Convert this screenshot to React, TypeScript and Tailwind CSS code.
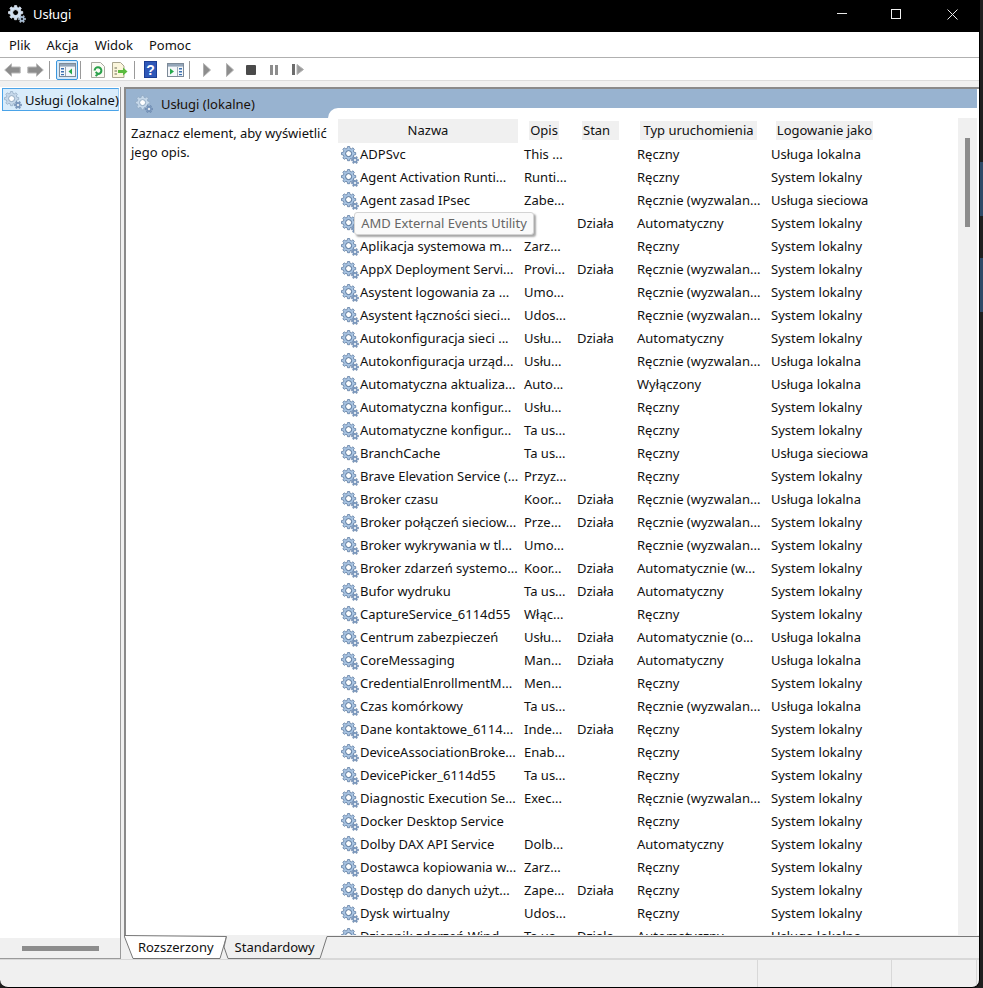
import React from "react";

type Row = [string, string, string, string, string];

const rows: Row[] = [
  ["ADPSvc", "This ...", "", "Ręczny", "Usługa lokalna"],
  ["Agent Activation Runti...", "Runti...", "", "Ręczny", "System lokalny"],
  ["Agent zasad IPsec", "Zabe...", "", "Ręcznie (wyzwalan...", "Usługa sieciowa"],
  ["", "", "Działa", "Automatyczny", "System lokalny"],
  ["Aplikacja systemowa m...", "Zarz...", "", "Ręczny", "System lokalny"],
  ["AppX Deployment Servi...", "Provi...", "Działa", "Ręcznie (wyzwalan...", "System lokalny"],
  ["Asystent logowania za ...", "Umo...", "", "Ręcznie (wyzwalan...", "System lokalny"],
  ["Asystent łączności sieci...", "Udos...", "", "Ręcznie (wyzwalan...", "System lokalny"],
  ["Autokonfiguracja sieci ...", "Usłu...", "Działa", "Automatyczny", "System lokalny"],
  ["Autokonfiguracja urząd...", "Usłu...", "", "Ręcznie (wyzwalan...", "Usługa lokalna"],
  ["Automatyczna aktualiza...", "Auto...", "", "Wyłączony", "Usługa lokalna"],
  ["Automatyczna konfigur...", "Usłu...", "", "Ręczny", "System lokalny"],
  ["Automatyczne konfigur...", "Ta us...", "", "Ręczny", "System lokalny"],
  ["BranchCache", "Ta us...", "", "Ręczny", "Usługa sieciowa"],
  ["Brave Elevation Service (...", "Przyz...", "", "Ręczny", "System lokalny"],
  ["Broker czasu", "Koor...", "Działa", "Ręcznie (wyzwalan...", "Usługa lokalna"],
  ["Broker połączeń sieciow...", "Prze...", "Działa", "Ręcznie (wyzwalan...", "System lokalny"],
  ["Broker wykrywania w tl...", "Umo...", "", "Ręcznie (wyzwalan...", "System lokalny"],
  ["Broker zdarzeń systemo...", "Koor...", "Działa", "Automatycznie (w...", "System lokalny"],
  ["Bufor wydruku", "Ta us...", "Działa", "Automatyczny", "System lokalny"],
  ["CaptureService_6114d55", "Włąc...", "", "Ręczny", "System lokalny"],
  ["Centrum zabezpieczeń", "Usłu...", "Działa", "Automatycznie (o...", "Usługa lokalna"],
  ["CoreMessaging", "Man...", "Działa", "Automatyczny", "Usługa lokalna"],
  ["CredentialEnrollmentM...", "Men...", "", "Ręczny", "System lokalny"],
  ["Czas komórkowy", "Ta us...", "", "Ręcznie (wyzwalan...", "Usługa lokalna"],
  ["Dane kontaktowe_6114...", "Inde...", "Działa", "Ręczny", "System lokalny"],
  ["DeviceAssociationBroke...", "Enab...", "", "Ręczny", "System lokalny"],
  ["DevicePicker_6114d55", "Ta us...", "", "Ręczny", "System lokalny"],
  ["Diagnostic Execution Se...", "Exec...", "", "Ręcznie (wyzwalan...", "System lokalny"],
  ["Docker Desktop Service", "", "", "Ręczny", "System lokalny"],
  ["Dolby DAX API Service", "Dolb...", "", "Automatyczny", "System lokalny"],
  ["Dostawca kopiowania w...", "Zarz...", "", "Ręczny", "System lokalny"],
  ["Dostęp do danych użyt...", "Zape...", "Działa", "Ręczny", "System lokalny"],
  ["Dysk wirtualny", "Udos...", "", "Ręczny", "System lokalny"],
  ["Dziennik zdarzeń Wind...", "Ta us...", "Działa", "Automatyczny", "Usługa lokalna"],
];

function gearPath(cx: number, cy: number, ro: number, ri: number, teeth: number) {
  const pts: string[] = [];
  const step = (Math.PI * 2) / teeth;
  for (let i = 0; i < teeth; i++) {
    const a = i * step;
    const list: [number, number][] = [
      [a - step * 0.34, ri],
      [a - step * 0.18, ro],
      [a + step * 0.18, ro],
      [a + step * 0.34, ri],
    ];
    for (const [t, r] of list) {
      pts.push(`${(cx + Math.cos(t) * r).toFixed(2)} ${(cy + Math.sin(t) * r).toFixed(2)}`);
    }
  }
  return "M" + pts.join("L") + "Z";
}

function Gear({ dark = false, faded = false }: { dark?: boolean; faded?: boolean }) {
  const big = dark ? "#cfe0f2" : faded ? "#c6d8ea" : "#a9c4e2";
  const edge = dark ? "#e9f1fa" : faded ? "#8fa8c0" : "#4f6f96";
  const hole = dark ? "#000000" : "#ffffff";
  return (
    <svg width="18" height="18" viewBox="0 0 18 18" className="shrink-0">
      <path d={gearPath(7.6, 7.6, 7.2, 5.4, 8)} fill={big} stroke={edge} strokeWidth="0.7" strokeLinejoin="round" />
      <circle cx="7.6" cy="7.6" r="3" fill={hole} stroke={edge} strokeWidth="1" />
      <path d={gearPath(14, 14, 3.8, 2.5, 6)} fill={dark ? "#9fb6cf" : "#7f9cc0"} stroke={dark ? "#dbe6f2" : "#56729a"} strokeWidth="0.4" />
      <circle cx="14" cy="14" r="1" fill={hole} />
    </svg>
  );
}

function Sep({ className }: { className: string }) {
  return <div className={`h-[18px] w-px bg-[#9a9a9a] ${className}`} />;
}

function Arrow({ flip = false, className }: { flip?: boolean; className: string }) {
  return (
    <svg width="17" height="14" viewBox="0 0 17 14" className={className} style={flip ? { transform: "scaleX(-1)" } : undefined}>
      <path d="M0.7 7 L7.5 0.8 V4 H16.2 V10 H7.5 V13.2 Z" fill="#8c8c8c" stroke="#b8b8b8" strokeWidth="1" strokeLinejoin="round" />
    </svg>
  );
}

function ConsoleIcon({ green }: { green: "left" | "mid" }) {
  return (
    <svg width="17" height="14" viewBox="0 0 17 14">
      <rect x="0.5" y="0.5" width="16" height="13" fill="#f4f7fa" stroke="#7d8a98" />
      <rect x="1" y="1" width="15" height="2.6" fill="#93a5b8" />
      {green === "left" ? (
        <>
          <rect x="2" y="5" width="3" height="1.5" fill="#3a6fb0" />
          <rect x="2" y="8" width="3" height="1.5" fill="#3a6fb0" />
          <rect x="2" y="11" width="3" height="1.2" fill="#3a6fb0" />
          <line x1="6.5" y1="4" x2="6.5" y2="13" stroke="#9aa6b2" />
          <path d="M13 5.5 V11.5 L9.5 8.5 Z" fill="#24a84a" />
        </>
      ) : (
        <>
          <path d="M3 5.5 V11.5 L7 8.5 Z" fill="#24a84a" />
          <line x1="10.5" y1="4" x2="10.5" y2="13" stroke="#9aa6b2" />
          <rect x="12" y="5" width="3" height="1.5" fill="#3a6fb0" />
          <rect x="12" y="8" width="3" height="1.5" fill="#3a6fb0" />
          <rect x="12" y="11" width="3" height="1.2" fill="#3a6fb0" />
        </>
      )}
    </svg>
  );
}

function Toolbar() {
  return (
    <div className="flex h-[22px] items-center bg-white pt-[1px]">
      <Arrow className="ml-[4px]" />
      <Arrow flip className="ml-[6px]" />
      <Sep className="ml-[5px]" />
      <div className="ml-[6px] flex h-[20px] w-[22px] items-center justify-center rounded-[2px] border border-[#3a96dd] bg-[#d5e9f9]">
        <ConsoleIcon green="left" />
      </div>
      <Sep className="ml-[2px]" />
      <svg width="14" height="16" viewBox="0 0 14 16" className="ml-[10px]">
        <path d="M0.5 0.5 H9.5 L13.5 4.5 V15.5 H0.5 Z" fill="#fbfbf4" stroke="#a9a9a0" />
        <path d="M3.6 8.5 A3.4 3.4 0 1 1 7 12 M7 12 L4.6 10 M7 12 L4.6 14" fill="none" stroke="#2aa14a" strokeWidth="2" />
      </svg>
      <svg width="16" height="16" viewBox="0 0 16 16" className="ml-[7px]">
        <path d="M0.5 0.5 H8.5 L12 4 V15.5 H0.5 Z" fill="#fbf6dc" stroke="#a9a58e" />
        <path d="M2.5 6 H5 M2.5 9 H5 M2.5 12 H5" stroke="#6b6b55" />
        <path d="M6 8 H11 V5.5 L15.5 9.5 L11 13.5 V11 H6 Z" fill="#5bbb3e" />
      </svg>
      <Sep className="ml-[6px]" />
      <div className="ml-[9px] flex h-[17px] w-[13px] items-center justify-center border border-[#1c3d94] bg-[#2f58b8] text-[14px] font-bold leading-none text-white [font-family:'Liberation_Sans',sans-serif]">
        ?
      </div>
      <div className="ml-[10px]">
        <ConsoleIcon green="mid" />
      </div>
      <Sep className="ml-[5px]" />
      <svg width="8" height="14" viewBox="0 0 8 14" className="ml-[13px]"><path d="M0.5 0.5 L7.5 7 L0.5 13.5 Z" fill="#8d8d8d" stroke="#b0b0b0" /></svg>
      <svg width="8" height="14" viewBox="0 0 8 14" className="ml-[15px]"><path d="M0.5 0.5 L7.5 7 L0.5 13.5 Z" fill="#8d8d8d" stroke="#b0b0b0" /></svg>
      <div className="ml-[12px] h-[10px] w-[10px] rounded-[1px] bg-[#4a4a4a]" />
      <svg width="8" height="10" viewBox="0 0 8 10" className="ml-[14px]"><rect width="3" height="10" fill="#8d8d8d" /><rect x="5" width="3" height="10" fill="#8d8d8d" /></svg>
      <svg width="12" height="11" viewBox="0 0 12 11" className="ml-[14px]"><rect width="3" height="11" fill="#6c6c6c" /><path d="M5 0.5 L11.5 5.5 L5 10.5 Z" fill="#9a9a9a" stroke="#b0b0b0" /></svg>
    </div>
  );
}

function HeadCell({ label, className }: { label: string; className: string }) {
  return <div className={`flex items-center whitespace-nowrap bg-[#f0f0f0] ${className}`}>{label}</div>;
}

function ServiceRow({ row }: { row: Row }) {
  return (
    <div className="grid h-[23px] shrink-0 grid-cols-[186px_53px_60px_134px_1fr] items-center whitespace-nowrap">
      <div className="flex items-center gap-[1px] pl-[3px]">
        <Gear />
        <span>{row[0]}</span>
      </div>
      <span>{row[1]}</span>
      <span>{row[2]}</span>
      <span>{row[3]}</span>
      <span>{row[4]}</span>
    </div>
  );
}

export default function App() {
  return (
    <div className="relative h-[988px] w-[983px] overflow-hidden bg-[#1f1f1f] text-[13px] leading-none text-[#111] [font-family:'Noto_Sans',sans-serif]">
      <div className="absolute left-[980px] top-[162px] h-[54px] w-[3px] bg-[#2f4a68]" />
      <div className="absolute left-[980px] top-[258px] h-[54px] w-[3px] bg-[#2f4a68]" />
      <div className="flex h-[988px] w-[980px] flex-col overflow-hidden rounded-b-[8px] border-b border-r border-black bg-[#f0f0f0]">
        {/* Title bar */}
        <div className="flex h-[32px] shrink-0 items-center bg-black pb-[4px] text-white">
          <div className="ml-[8px]"><Gear dark /></div>
          <span className="ml-[7px]">Usługi</span>
          <div className="flex-1" />
          <svg width="10" height="2" viewBox="0 0 10 2" className="mr-[44px]"><rect width="10" height="1" fill="#e8e8e8" /></svg>
          <svg width="10" height="10" viewBox="0 0 10 10" className="mr-[46px]"><rect x="0.5" y="0.5" width="9" height="9" fill="none" stroke="#f0f0f0" /></svg>
          <svg width="11" height="11" viewBox="0 0 11 11" className="mr-[21px]"><path d="M0.5 0.5 L10.5 10.5 M10.5 0.5 L0.5 10.5" stroke="#e8e8e8" /></svg>
        </div>
        {/* Menu bar */}
        <div className="flex h-[25px] shrink-0 items-center gap-[16px] bg-white pl-[9px] pt-[2px]">
          <span>Plik</span>
          <span>Akcja</span>
          <span>Widok</span>
          <span>Pomoc</span>
        </div>
        <div className="h-px shrink-0 bg-[#b0b0b0]" />
        <Toolbar />
        <div className="h-px shrink-0 bg-[#dcdcdc]" />
        <div className="h-[6px] shrink-0" />

        {/* Main split */}
        <div className="flex h-[872px] shrink-0">
          {/* Tree */}
          <div className="flex w-[121px] shrink-0 flex-col border-b border-r border-[#9a9a9a] bg-white pt-[1px]">
            <div className="ml-[2px] flex h-[23px] w-[117px] items-center gap-[3px] whitespace-nowrap border border-[#4aa3e8] border-r-[#9fd0f5] bg-[#d9ecfb] pl-[1px]">
              <Gear faded />
              <span className="pt-[2px]">Usługi (lokalne)</span>
            </div>
            <div className="flex-1" />
            <div className="flex h-[20px] shrink-0 items-center justify-center bg-[#f0f0f0]">
              <div className="h-[5px] w-[77px] bg-[#8c8c8c]" />
            </div>
          </div>
          <div className="w-[3px] shrink-0" />
          {/* Right panel */}
          <div className="flex min-w-0 flex-1 flex-col">
            <div className="flex h-[848px] shrink-0 flex-col overflow-hidden border-l-2 border-t-2 border-[#8a8a8a] bg-white">
              <div className="mr-[2px] flex h-[29px] shrink-0 items-center gap-[8px] bg-[#98b3d0] pl-[9px] text-[#1a1008]">
                <Gear faded />
                <span className="pt-[2px]">Usługi (lokalne)</span>
              </div>
              <div className="flex min-h-0 flex-1 pr-[2px]">
                <div className="w-[202px] shrink-0 whitespace-nowrap pl-[5px] pt-[6px] leading-[19px]">
                  Zaznacz element, aby wyświetlić
                  <br />
                  jego opis.
                </div>
                <div className="relative -mt-[10px] flex min-w-0 flex-1 rounded-tl-[10px] bg-white pt-[10px]">
                  <div className="flex min-w-0 flex-1 flex-col overflow-hidden pl-[10px]">
                    <div className="flex h-[24px] shrink-0 items-center pt-px">
                      <HeadCell label="Nazwa" className="h-[24px] w-[180px] justify-center" />
                      <HeadCell label="Opis" className="ml-[11px] h-[19px] w-[30px] justify-center" />
                      <HeadCell label="Stan" className="ml-[23px] h-[19px] w-[37px] pl-[1px]" />
                      <HeadCell label="Typ uruchomienia" className="ml-[21px] h-[19px] w-[117px] justify-center" />
                      <HeadCell label="Logowanie jako" className="ml-[19px] h-[19px] w-[97px] justify-center" />
                    </div>
                    <div className="h-px shrink-0" />
                    {rows.map((row, i) => (
                      <ServiceRow key={i} row={row} />
                    ))}
                  </div>
                  <div className="w-[19px] shrink-0 bg-[#f0f0f0] pl-[7px] pt-[20px]">
                    <div className="h-[89px] w-[5px] bg-[#8c8c8c]" />
                  </div>
                  {/* Tooltip */}
                  <div className="absolute left-[26px] top-[104px] flex h-[23px] w-[180px] items-center justify-center whitespace-nowrap rounded-[3px] border border-[#d4d4d4] bg-[#fafafa] text-[#666] shadow-[2px_2px_2px_rgba(0,0,0,0.35)]">
                    AMD External Events Utility
                  </div>
                </div>
              </div>
            </div>
            {/* Tabs */}
            <div className="relative flex h-[24px] shrink-0 items-center">
              <svg width="855" height="24" viewBox="0 0 855 24" className="absolute left-0 top-0">
                <path d="M0 0.5 L9 23.5 H96 L102.5 1.5 Z" fill="#ffffff" stroke="#777" />
                <path d="M102.5 1.5 L100 12 L104 23.5 H196 L203 1.5 H855" fill="#f0f0f0" stroke="#777" />
                <path d="M197 23.5 H855" stroke="#d8d8d8" />
              </svg>
              <span className="relative ml-[14px]">Rozszerzony</span>
              <span className="relative ml-[21px]">Standardowy</span>
            </div>
          </div>
        </div>

        {/* Status bar */}
        <div className="flex flex-1 border-t border-[#d8d8d8]">
          <div className="w-[758px] shrink-0 border-r border-[#d8d8d8]" />
          <div className="w-[134px] shrink-0 border-r border-[#d8d8d8]" />
          <div className="w-[85px] shrink-0 border-r border-[#d8d8d8]" />
        </div>
      </div>
    </div>
  );
}
